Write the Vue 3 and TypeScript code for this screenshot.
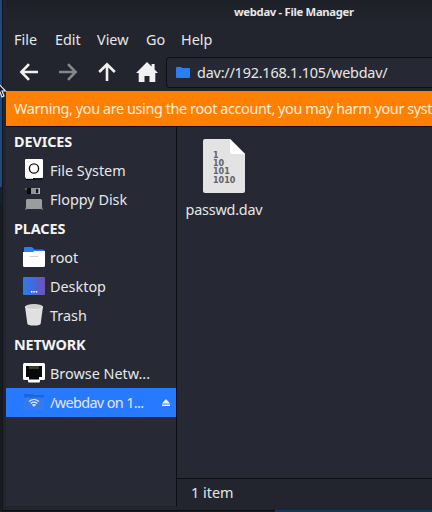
<script setup lang="ts">
interface Entry {
  label: string
  icon: 'disk' | 'floppy' | 'folder' | 'desktop' | 'trash' | 'network' | 'share'
  active?: boolean
}
interface Group {
  title: string
  entries: Entry[]
}

const menus: string[] = ['File', 'Edit', 'View', 'Go', 'Help']
const groups: Group[] = [
  {
    title: 'DEVICES',
    entries: [
      { label: 'File System', icon: 'disk' },
      { label: 'Floppy Disk', icon: 'floppy' },
    ],
  },
  {
    title: 'PLACES',
    entries: [
      { label: 'root', icon: 'folder' },
      { label: 'Desktop', icon: 'desktop' },
      { label: 'Trash', icon: 'trash' },
    ],
  },
  {
    title: 'NETWORK',
    entries: [
      { label: 'Browse Netw...', icon: 'network' },
      { label: '/webdav on 1...', icon: 'share', active: true },
    ],
  },
]
const bits: string[] = ['1', '10', '101', '1010']
</script>

<template>
  <div class="screen">
    <div class="window">
      <header class="titlebar"><span class="title">webdav - File Manager</span></header>
      <nav class="menubar">
        <span v-for="m in menus" :key="m" :class="['menu', 'menu-' + m.toLowerCase()]">{{ m }}</span>
      </nav>
      <div class="toolbar">
        <svg class="tool" viewBox="0 0 20 20"><path d="M10 2.200 2.400 10l7.600 7.800M3 10h16" /></svg>
        <svg class="tool dim" viewBox="0 0 20 20"><path d="M10 2.200 17.600 10 10 17.800M17 10H1" /></svg>
        <svg class="tool" viewBox="0 0 20 20"><path d="M2.200 10 10 2.400l7.800 7.600M10 3v16" /></svg>
        <svg class="tool home" viewBox="0 0 22 20">
          <path d="M11 0 0 11h2.700v9h5.800v-6h5v6h5.800v-9H22l-3.400-3.400V2h-3v2.600z" />
        </svg>
        <div class="address">
          <svg class="addr-icon" viewBox="0 0 14 11">
            <path d="M0 1q0-1 1-1h4l1.300 1H13q1 0 1 1v8q0 1-1 1H1q-1 0-1-1z" fill="#2e7cf2" />
          </svg>
          <span class="path">dav://192.168.1.105/webdav/</span>
        </div>
      </div>
      <div class="warning"><span>Warning, you are using the root account, you may harm your syst</span></div>
      <div class="body">
        <aside class="sidebar">
          <section v-for="g in groups" :key="g.title">
            <h2>{{ g.title }}</h2>
            <div v-for="e in g.entries" :key="e.label" :class="['row', { active: e.active }]">
              <svg class="icon" viewBox="0 0 22 22">
                <template v-if="e.icon === 'disk'">
                  <rect x="2" y="0" width="18" height="19" rx="1" fill="#fff" />
                  <circle cx="11" cy="9.500" r="4.600" fill="none" stroke="#17191e" stroke-width="1.400" />
                  <path d="M3 19h16v2H3z" fill="#050608" />
                  <path d="M3 19h7v1H3z" fill="#ddd" />
                  <path d="M13 19v2M15 19v2M17 19v2" stroke="#555" stroke-width=".5" />
                </template>
                <template v-else-if="e.icon === 'floppy'">
                  <path d="M4 0h4v6H4z" fill="#08090b" />
                  <path d="M2.500 0h1v2h-1z" fill="#8a8b8e" />
                  <path d="M8 0h8v6H8z" fill="#929396" />
                  <path d="M13 1h2.500v4H13z" fill="#111318" />
                  <path d="M15.500 0H17v6h-1.500z" fill="#b2b3b5" />
                  <path d="M4 11h14l1 1v9H3v-9z" fill="#9b9c9e" />
                  <path d="M2 19.500h1.500V22H2zM18.500 19.500H20V22h-1.500z" fill="#666" />
                </template>
                <template v-else-if="e.icon === 'folder'">
                  <path d="M1 2q0-1 1-1h7l2.500 2.500H20q1.500 0 1.500 1.500v6H1z" fill="#2d7cf4" />
                  <path d="M0 6h10l1.500-1H22v14.500q0 1.500-1.500 1.500h-19Q0 21 0 19.500z" fill="#fff" />
                  <path d="M6.500 10.500h9" stroke="#d0d0d0" stroke-width="1" />
                </template>
                <template v-else-if="e.icon === 'desktop'">
                  <defs>
                    <linearGradient id="screenFill" x1="0" y1="0" x2="1" y2="0">
                      <stop offset="0" stop-color="#2c7bef" />
                      <stop offset=".55" stop-color="#4866d8" />
                      <stop offset="1" stop-color="#7450b4" />
                    </linearGradient>
                  </defs>
                  <rect x="0" y="2" width="22" height="18" rx="1" fill="url(#screenFill)" />
                  <path d="M8 16h1.500v1.500H8zM10.400 16h1.500v1.500h-1.500zM12.800 16h1.500v1.500h-1.500z" fill="#fff" />
                </template>
                <template v-else-if="e.icon === 'trash'">
                  <path d="M2 2.500 4.300 19.500Q4.500 21.600 11 21.600t6.700-2.100L20 2.500z" fill="#e0e0e0" />
                  <ellipse cx="11" cy="3" rx="8.700" ry="2.500" fill="#cfcfcf" stroke="#f0f0f0" stroke-width=".7" />
                </template>
                <template v-else-if="e.icon === 'network'">
                  <path d="M1.500 1h19q1.500 0 1.500 1.500v14q0 1.500-1.500 1.500H17v1.500q0 1-1 1H6q-1 0-1-1V18H1.500Q0 18 0 16.500v-14Q0 1 1.500 1z" fill="#fff" />
                  <path d="M3 4h16v11h-3v2.500H6V15H3z" fill="#08090a" />
                  <path d="M7 4v3M9 4v3M11 4v3M13 4v3M15 4v3" stroke="#a39871" stroke-width=".7" />
                </template>
                <template v-else>
                  <path d="M1 4q0-1 1-1h7l2 1h9q1 0 1 1v2H1z" fill="#1d66da" />
                  <rect x="1" y="6.500" width="20" height="12.500" rx="1" fill="#347bf0" />
                  <g fill="none" stroke="#e5eeff" stroke-width="1.100">
                    <path d="M6 10.500Q11 6.400 16 10.500M7.700 12.500q3.300-2.700 6.600 0" />
                    <path d="M9.300 14.200q1.700-1.300 3.400 0" />
                  </g>
                  <circle cx="11" cy="14.800" r=".8" fill="#fff" />
                </template>
              </svg>
              <span class="label">{{ e.label }}</span>
              <svg v-if="e.active" class="eject" viewBox="0 0 8 7"><path d="M4 0 8 4.400H0zM0 5.400h8V7H0z" fill="#f3f7ff" /></svg>
            </div>
          </section>
        </aside>
        <main class="main">
          <div class="files">
            <div class="file">
              <svg class="doc" viewBox="0 0 42 54">
                <path d="M2 0h25l15 15v37q0 2-2 2H2q-2 0-2-2V2Q0 0 2 0z" fill="#e3e3e3" />
                <path d="M27 0l15 15H29q-2 0-2-2z" fill="#fff" />
                <text v-for="(b, i) in bits" :key="b" x="10" :y="18.700 + i * 8.300" :textLength="b.length * 5.600">{{ b }}</text>
              </svg>
              <span class="filename">passwd.dav</span>
            </div>
          </div>
          <footer class="status"><span>1 item</span></footer>
        </main>
      </div>
    </div>
    <div class="desktop-strip"></div>
    <svg class="pointer" viewBox="0 0 7 16">
      <path d="M-3-2 5.500 7H2l2 5-2 1-2-5-3 3z" fill="#15191f" stroke="#f2f2f2" stroke-width="1.100" />
    </svg>
  </div>
</template>

<style>
body {
  margin: 0;
  overflow: hidden;
}
</style>

<style scoped>
.screen {
  position: relative;
  box-sizing: border-box;
  width: 432px;
  height: 512px;
  padding-left: 2px;
  overflow: hidden;
  font-family: 'Noto Sans', sans-serif;
  font-size: 14.4px;
  color: #e6e7e9;
  white-space: nowrap;
  background: linear-gradient(#204a7c 0 187px, #142033 187px 203px, #181b22 203px);
}
.window {
  box-sizing: border-box;
  display: flex;
  flex-direction: column;
  height: 511px;
  padding: 0 0 4px 3px;
  border-left: 1px solid #11151c;
  border-bottom: 1px solid #0c0e13;
  background: #22252d;
}
.titlebar {
  height: 26px;
  flex: none;
  box-sizing: border-box;
  padding: 3px 0 0 228px;
  background: linear-gradient(#1d2027, #22252d);
  font-size: 11.3px;
  letter-spacing: -0.32px;
  line-height: 18px;
  font-weight: 700;
}
.menubar {
  height: 29px;
  flex: none;
  display: flex;
  padding-left: 8px;
  line-height: 28px;
}
.menu-file { width: 41px; }
.menu-edit { width: 42px; }
.menu-view { width: 49px; }
.menu-go { width: 35px; }
.toolbar {
  height: 36px;
  flex: none;
  display: flex;
  align-items: center;
  padding: 0 0 3px 13px;
  box-sizing: border-box;
}
.tool {
  width: 20px;
  height: 20px;
  margin-right: 19px;
  flex: none;
  fill: none;
  stroke: #f1f1f1;
  stroke-width: 2.6;
}
.tool.dim { stroke: #858689; }
.tool.home {
  width: 22px;
  margin: 0 8px 0 0;
  fill: #f1f1f1;
  stroke: none;
}
.address {
  flex: 1;
  display: flex;
  align-items: center;
  box-sizing: border-box;
  height: 31px;
  padding-left: 9px;
  margin-top: 2px;
  border: 1px solid #0d0f14;
  border-right: 0;
  border-radius: 4px 0 0 4px;
  background: #262933;
}
.addr-icon { width: 14px; height: 11px; margin-right: 7px; }
.path { letter-spacing: -0.2px; }
.warning {
  height: 35px;
  flex: none;
  padding-left: 8px;
  border-bottom: 1px solid #0c0e13;
  background: #ff7f00;
  color: #fff0df;
  letter-spacing: -0.34px;
  word-spacing: -0.2px;
  line-height: 35px;
  overflow: hidden;
}
.body {
  display: flex;
  flex: 1;
  min-height: 0;
}
.sidebar {
  width: 170px;
  flex: none;
  border-right: 1px solid #0c0e13;
  background: #272a34;
}
h2 {
  margin: 0;
  padding-left: 8px;
  height: 29px;
  font-size: 14.4px;
  line-height: 29px;
  font-weight: 700;
  letter-spacing: -0.1px;
  color: #f4f4f5;
}
.row {
  display: flex;
  align-items: center;
  height: 29px;
  padding-left: 17px;
}
.row.active { background: #277aff; }
.icon { width: 22px; height: 22px; margin: 0 5px 1px 0; flex: none; }
.label { line-height: 29px; }
.active .label { letter-spacing: -0.62px; }
.eject { width: 8px; height: 7px; margin: 0 6px 0 auto; }
.main {
  flex: 1;
  display: flex;
  flex-direction: column;
  min-width: 0;
}
.files { flex: 1; background: #262933; }
.file {
  display: flex;
  flex-direction: column;
  align-items: center;
  width: 94px;
  padding-top: 12px;
}
.doc { width: 42px; height: 54px; }
.doc text {
  font-family: 'DejaVu Sans', sans-serif;
  font-size: 8px;
  font-weight: 700;
  fill: #626262;
}
.filename { line-height: 20px; margin-top: 7px; letter-spacing: -0.2px; }
.status {
  height: 27px;
  flex: none;
  padding-left: 14px;
  border-top: 1px solid #0c0e13;
  line-height: 28px;
}
.desktop-strip {
  position: absolute;
  left: 275px;
  right: 0;
  bottom: 0;
  height: 2px;
  background: #1a355b;
}
.pointer {
  position: absolute;
  left: 0;
  top: 84px;
  width: 7px;
  height: 16px;
}
</style>
